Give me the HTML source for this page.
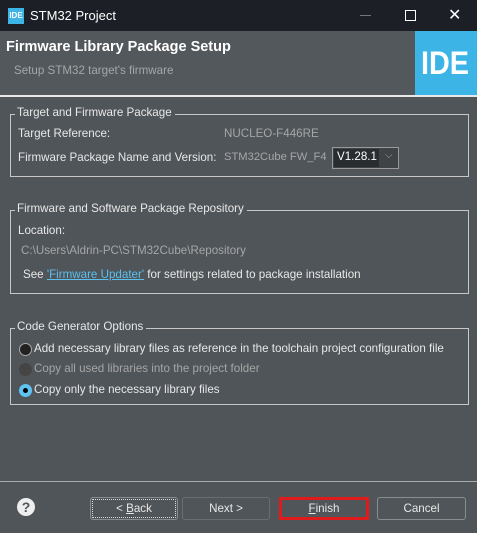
<!DOCTYPE html>
<html><head><style>
*{margin:0;padding:0;box-sizing:border-box}
body{width:477px;height:533px;background:#505559;font-family:"Liberation Sans",sans-serif;font-size:11.6px;color:#e8e8e8;position:relative;overflow:hidden}
.a{position:absolute;white-space:nowrap}
.g{position:absolute;border:1px solid #c8c8c8;left:10px;width:459px}
.lg{position:absolute;top:-9px;left:4px;background:#505559;padding:0 3px 0 2px;color:#e8e8e8}
.dis{color:#a6a6a6}
.btn{position:absolute;top:497px;height:23px;border:1px solid #8a8d90;border-radius:3px;text-align:center;line-height:21px;color:#e8e8e8}
.r{position:absolute;width:13px;height:13px;border-radius:50%;left:19px}
</style></head><body>
<div class="a" style="left:0;top:0;width:477px;height:31px;background:#1c1f26"></div>
<div class="a" style="left:8px;top:8px;width:16px;height:16px;background:#3cb4e6;color:#fff;font-size:8px;font-weight:bold;line-height:16px;text-align:center">IDE</div>
<div class="a" style="left:30px;top:8px;font-size:13px;color:#fff">STM32 Project</div>
<div class="a" style="left:360px;top:15px;width:11px;height:1px;background:#777"></div>
<div class="a" style="left:405px;top:10px;width:11px;height:11px;border:1px solid #fff"></div>
<div class="a" style="left:448px;top:5px;font-size:16px;color:#fff">✕</div>
<div class="a" style="left:0;top:31px;width:477px;height:64px;background:#53585c"></div>
<div class="a" style="left:415px;top:31px;width:62px;height:64px;background:#3cb4e6"></div>
<div class="a" style="left:421px;top:31px;height:64px;color:#fff;font-weight:bold;font-size:32px;line-height:64px;transform:scaleX(0.9);transform-origin:left">IDE</div>
<div class="a" style="left:6px;top:39px;font-size:14.5px;font-weight:bold;color:#fff">Firmware Library Package Setup</div>
<div class="a dis" style="left:14px;top:64px">Setup STM32 target's firmware</div>
<div class="a" style="left:0;top:95px;width:477px;height:2px;background:#e8e8e8"></div>

<div class="g" style="top:114px;height:63px"><span class="lg">Target and Firmware Package</span></div>
<div class="a" style="left:18px;top:127px">Target Reference:</div>
<div class="a dis" style="left:224px;top:127px">NUCLEO-F446RE</div>
<div class="a" style="left:18px;top:151px">Firmware Package Name and Version:</div>
<div class="a dis" style="left:224px;top:151px;font-size:11.2px">STM32Cube FW_F4</div>
<div class="a" style="left:332px;top:147px;width:67px;height:22px;border:1px solid #999;background:#3f4346"></div>
<div class="a" style="left:334px;top:149px;width:45px;height:18px;background:#2a2d30;color:#fff;padding:1px 0 0 3px">V1.28.1</div>
<div class="a dis" style="left:385px;top:150px;font-size:10px">⌵</div>

<div class="g" style="top:210px;height:84px"><span class="lg">Firmware and Software Package Repository</span></div>
<div class="a" style="left:18px;top:224px">Location:</div>
<div class="a dis" style="left:21px;top:244px">C:\Users\Aldrin-PC\STM32Cube\Repository</div>
<div class="a" style="left:23px;top:268px">See <span style="color:#5bc0f0;text-decoration:underline">'Firmware Updater'</span> for settings related to package installation</div>

<div class="g" style="top:328px;height:77px"><span class="lg">Code Generator Options</span></div>
<div class="r" style="top:343px;background:#222;border:1px solid #aaa"></div>
<div class="a" style="left:34px;top:342px">Add necessary library files as reference in the toolchain project configuration file</div>
<div class="r" style="top:363px;background:#454545"></div>
<div class="a dis" style="left:34px;top:362px">Copy all used libraries into the project folder</div>
<div class="r" style="top:384px;background:#5ec3f2"><div style="position:absolute;left:4px;top:4px;width:5px;height:5px;border-radius:50%;background:#000"></div></div>
<div class="a" style="left:34px;top:383px">Copy only the necessary library files</div>

<div class="a" style="left:0;top:481px;width:477px;height:1px;background:#aaa"></div>
<div class="a" style="left:17px;top:498px;width:18px;height:18px;border-radius:50%;background:#eee;color:#505559;font-weight:bold;font-size:14px;text-align:center;line-height:18px">?</div>
<div class="btn" style="left:90px;width:88px;outline:1px dotted #ddd;outline-offset:-3px">&lt; <u>B</u>ack</div>
<div class="btn dis" style="left:182px;width:88px;border-color:#6a6d70">Next &gt;</div>
<div class="btn" style="left:279px;width:90px;border:3px solid #e01b1b;border-radius:0;line-height:17px"><u>F</u>inish</div>
<div class="btn" style="left:377px;width:89px">Cancel</div>
</body></html>
